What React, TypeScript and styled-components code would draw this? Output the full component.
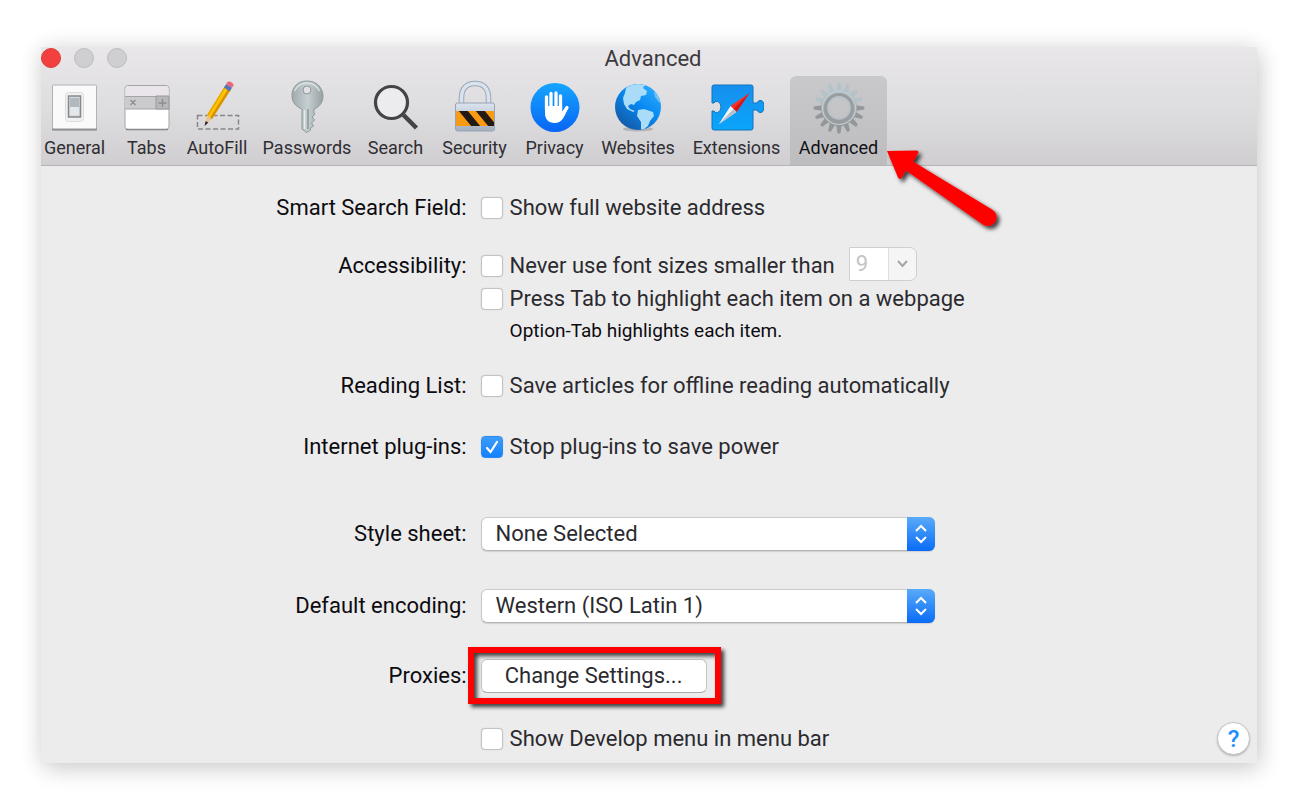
import React, { useState } from "react";
import styled, { createGlobalStyle } from "styled-components";

const GlobalStyle = createGlobalStyle`
  *, *::before, *::after { box-sizing: border-box; }
  body { margin: 0; background: #fff; color: #2b2a2f; font-family: Roboto, "Liberation Sans", sans-serif; font-size: 22px; line-height: 28px; }
  button, select, input { font: inherit; color: inherit; margin: 0; }
`;

const Page = styled.div`
  padding: 47px 41px;
`;

const Window = styled.main`
  background: #ececec;
  box-shadow: 0 0 22px rgba(0, 0, 0, 0.08), 3px 6px 22px rgba(0, 0, 0, 0.16);
`;

const Header = styled.header`
  background: linear-gradient(#e9e7e9, #dddcde 55%, #d0ced1);
  border-bottom: 1px solid #b6b4b7;
`;

const TitleBar = styled.div`
  display: grid;
  grid-template-columns: 1fr auto 1fr;
  height: 29px;
`;

const Lights = styled.div`
  display: flex;
  gap: 13px;
  padding-top: 1px;
`;

const Light = styled.button<{ $fill: string; $edge: string }>`
  width: 20px;
  height: 20px;
  padding: 0;
  border: 1px solid ${(p) => p.$edge};
  border-radius: 50%;
  background: ${(p) => p.$fill};
`;

const Title = styled.h1`
  margin: 0;
  padding-left: 8px;
  font-size: 22px;
  line-height: 24px;
  font-weight: 400;
  color: #3c3a3e;
`;

const Toolbar = styled.nav`
  display: flex;
  margin-left: -6px;
`;

const Tab = styled.button<{ $width: number; $active?: boolean }>`
  display: flex;
  flex-direction: column;
  align-items: center;
  gap: 4px;
  flex: none;
  width: ${(p) => p.$width}px;
  height: 89px;
  padding: 7px 0 6px;
  border: 0;
  border-radius: 6px 6px 0 0;
  background: ${(p) => (p.$active ? "linear-gradient(#c9c8ca, #bdbcbe)" : "none")};
  color: ${(p) => (p.$active ? "#111014" : "#2f2e33")};
  font-size: 18px;
  font-weight: 400;
  line-height: 22px;
  svg { display: block; flex: none; }
`;

const TabAnchor = styled.div`
  position: relative;
  margin-left: 1px;
`;

const Arrow = styled.svg`
  position: absolute;
  left: calc(100% - 4px);
  top: 70px;
  pointer-events: none;
`;

const Form = styled.form`
  padding: 25px 0 7px;
`;

const Row = styled.div<{ $gap?: number }>`
  display: grid;
  grid-template-columns: 35% 1fr auto;
  column-gap: 14px;
  align-items: start;
  margin-top: ${(p) => p.$gap ?? 0}px;
`;

const Caption = styled.span`
  text-align: right;
  line-height: 34px;
  color: #0c0b10;
  white-space: nowrap;
`;

const CaptionLabel = styled(Caption).attrs({ as: "label" })<{ htmlFor?: string }>``;

const Line = styled.div<{ $height?: number }>`
  display: flex;
  align-items: center;
  height: ${(p) => p.$height ?? 34}px;
`;

const CheckLabel = styled.label`
  display: flex;
  align-items: center;
  gap: 7px;
  white-space: nowrap;
`;

const Note = styled.p`
  margin: 0;
  padding-left: 29px;
  color: #0c0b10;
  font-size: 19px;
  line-height: 32px;
`;

const CheckBox = styled.span`
  position: relative;
  display: flex;
  width: 22px;
  height: 22px;
  svg { position: absolute; inset: 0; pointer-events: none; }
`;

const CheckInput = styled.input`
  appearance: none;
  width: 22px;
  height: 22px;
  border: 1px solid #c3c3c3;
  border-radius: 4px;
  background: #fff;
  box-shadow: 0 0 1px #bbb;
  &:checked { background: linear-gradient(#3d9dfb, #1480fa); border-color: #2a8bf5; }
`;

const SelectWrap = styled.div`
  position: relative;
  width: 100%;
  max-width: 454px;
  height: 34px;
`;

const PopUp = styled.select`
  appearance: none;
  display: block;
  width: 100%;
  height: 34px;
  padding: 0 40px 0 14px;
  border: 1px solid #c9c9c9;
  border-bottom-color: #b5b5b5;
  border-radius: 6px;
  background: #fff;
  box-shadow: 0 1px 1px rgba(0, 0, 0, 0.12);
`;

const PopUpCap = styled.span`
  position: absolute;
  inset: 0 0 0 auto;
  display: flex;
  align-items: center;
  justify-content: center;
  width: 28px;
  border-radius: 0 6px 6px 0;
  background: linear-gradient(#58abf8, #0a6bf6);
  pointer-events: none;
`;

const Combo = styled.div`
  position: relative;
  width: 68px;
  height: 34px;
  margin: -4px 0 0 14px;
`;

const ComboSelect = styled.select`
  appearance: none;
  display: block;
  width: 68px;
  height: 34px;
  padding: 0 0 0 6px;
  border: 1px solid #cfcfcf;
  border-radius: 1px 7px 7px 1px;
  background: linear-gradient(90deg, #fff 38px, #dedede 38px, #dedede 39px, #f5f5f5 39px);
  &:disabled { color: #c4c4c4; opacity: 1; }
`;

const ComboArrow = styled.svg`
  position: absolute;
  right: 8px;
  top: 12px;
  pointer-events: none;
`;

const PushButton = styled.button`
  width: 226px;
  height: 34px;
  padding: 0;
  border: 1px solid #c4c4c4;
  border-bottom-color: #aaa;
  border-radius: 6px;
  background: #fff;
`;

const Highlight = styled.div`
  position: relative;
  width: 226px;
  height: 34px;
  &::after {
    content: "";
    position: absolute;
    inset: -12px -14px -11px -13px;
    border: 6px solid #fe0000;
    box-shadow: 3px 3px 4px rgba(0, 0, 0, 0.75), inset 3px 3px 4px rgba(0, 0, 0, 0.75);
    pointer-events: none;
  }
`;

const HelpButton = styled.button`
  width: 33px;
  height: 33px;
  margin-right: 7px;
  padding: 0;
  border: 1px solid #c6c6c6;
  border-radius: 50%;
  background: #fff;
  box-shadow: 0 1px 2px rgba(0, 0, 0, 0.25);
  color: #1c8cff;
  font-size: 24px;
  font-weight: 500;
`;

const GeneralIcon = () => (
  <svg width="48" height="50" viewBox="0 0 48 50" aria-hidden="true">
    <rect x="1.5" y="2" width="44" height="45" rx="1" fill="#fafafb" stroke="#b2b2b5" />
    <path d="M1 46.5h45" stroke="#929296" strokeWidth="2" />
    <rect x="14.5" y="9.5" width="18" height="29" rx="3" fill="#f1f1f2" stroke="#dcdcde" />
    <rect x="17.5" y="13" width="12" height="21" fill="#d6dadd" stroke="#85898e" strokeWidth="1.5" />
    <path d="M19 15h9v9h-9z" fill="#b2babf" />
    <path d="M19 24h9v8h-9z" fill="#e4e8ea" />
  </svg>
);

const TabsIcon = () => (
  <svg width="48" height="50" viewBox="0 0 48 50" aria-hidden="true">
    <rect x="2" y="2.5" width="44" height="44" rx="3" fill="#fff" stroke="#a5a5a8" />
    <path d="M2.5 13V6q0-3 3-3h37q3 0 3 3v7z" fill="#e9e5ea" />
    <path d="M2 13h44v13H2z" fill="#cbcbcd" />
    <path d="M2 13.5h44M2 26h44" stroke="#a4a4a7" />
    <path d="M33 13h13v13H33z" fill="#b8b8bb" stroke="#98989b" />
    <path d="M7.5 17l5 5m0-5l-5 5M39.5 16v8m-4-4h8" stroke="#8d8a90" strokeWidth="1.3" />
    <path d="M3 46.5h42" stroke="#88888b" strokeWidth="1.5" />
  </svg>
);

const AutoFillIcon = () => (
  <svg width="48" height="50" viewBox="0 0 48 50" overflow="visible" aria-hidden="true">
    <rect x="4.5" y="32.5" width="41" height="13.5" fill="none" stroke="#88868a" strokeWidth="1.5" strokeDasharray="5 2.5" />
    <g transform="translate(-1 -1)">
      <path d="M13 43l2-10 5 4z" fill="#e7c592" />
      <path d="M12.500 44l1.200-5 2.600 1.800z" fill="#28242a" />
      <path d="M15 33L33 4l5.5 4L20 37z" fill="#ffc400" />
      <path d="M18.200 35.500L36.500 6.500l2 1.500L20 37z" fill="#d89000" />
      <path d="M15 33L33 4l1 .7L16.300 33.800z" fill="#e7a400" />
      <path d="M32 5.500l2.200-3.500 5.800 3.800-2.300 3.700z" fill="#5475b5" />
      <path d="M34.200 2l1.200-2q2-1.200 4.300.5t1.800 3l-1.500 2.300z" fill="#ee6677" />
    </g>
  </svg>
);

const PasswordsIcon = () => (
  <svg width="48" height="50" viewBox="0 3 48 50" overflow="visible" aria-hidden="true">
    <defs>
      <linearGradient id="key" x1="0" x2="1">
        <stop offset="0" stopColor="#a1abae" /><stop offset=".5" stopColor="#c5cfd1" /><stop offset="1" stopColor="#98a2a5" />
      </linearGradient>
    </defs>
    <path fillRule="evenodd" d="M24 1C15 1 9 7 9 15.500c0 7 4 11 10 13.500v20l4.500 3.500 4-2.500V48l3-2-2-3 3-3-2.500-3 3-3-1-1.500V29c6-2.500 9-7 9-13.500C39.500 7 33 1 24 1zm0 5a4 4 0 1 1 0 8 4 4 0 0 1 0-8z" fill="url(#key)" stroke="#8e989b" strokeWidth="1" />
    <path d="M21.500 30v19" stroke="#e8eeee" strokeWidth="1.500" />
    <path d="M25 29v20" stroke="#8c9598" strokeWidth="1.500" />
    <path d="M11.500 11q4-8 12.500-8t12.500 8" fill="none" stroke="#d8e0e1" strokeWidth="1.500" />
  </svg>
);

const SearchIcon = () => (
  <svg width="48" height="50" viewBox="0 0 48 50" aria-hidden="true">
    <path d="M31.500 32L44.500 45" stroke="#444346" strokeWidth="4.500" />
    <circle cx="19.500" cy="19.500" r="16" fill="#ececee" stroke="#444346" strokeWidth="3.200" />
  </svg>
);

const SecurityIcon = () => (
  <svg width="48" height="50" viewBox="0 0 48 50" overflow="visible" aria-hidden="true">
    <defs>
      <linearGradient id="lockBody" x2="0" y2="1">
        <stop offset="0" stopColor="#dbe4ee" /><stop offset="1" stopColor="#a3afbf" />
      </linearGradient>
      <clipPath id="lockBand"><path d="M5 28h38v15H5z" /></clipPath>
    </defs>
    <path d="M10.500 22V15C10.500 5 16 .500 24 .500S37.500 5 37.500 15v7" fill="none" stroke="#9ba8ba" strokeWidth="5.500" />
    <path d="M10.500 22V15C10.500 5 16 .500 24 .500S37.500 5 37.500 15v7" fill="none" stroke="#d9e3ee" strokeWidth="3.500" />
    <rect x="4.500" y="20" width="39" height="28" rx="2" fill="url(#lockBody)" stroke="#98a4b5" />
    <path d="M5 28h38v15H5z" fill="#f99b12" />
    <g clipPath="url(#lockBand)"><path d="M7 27h9l14 17h-9zM24 27h9l14 17h-9z" fill="#241a15" /></g>
  </svg>
);

const PrivacyIcon = () => (
  <svg width="50" height="50" viewBox="0 0 50 50" aria-hidden="true">
    <defs>
      <linearGradient id="privacy" x2="0" y2="1">
        <stop offset="0" stopColor="#16a5ff" /><stop offset="1" stopColor="#0865f4" />
      </linearGradient>
    </defs>
    <circle cx="25" cy="24.500" r="24.500" fill="url(#privacy)" />
    <g fill="none" stroke="#fff" strokeWidth="3.300" strokeLinecap="round">
      <path d="M16.500 26V14M21 25V10.500M26 25V10M30.500 25V13" />
      <path d="M32 32l5-7.500" />
    </g>
    <path d="M15 23h17.200v6l3.800-4 2 .5c-2 4-3 7-5 10-2 3-5 4.500-8.500 4.500-6 0-9.500-4-9.500-9.500z" fill="#fff" />
  </svg>
);

const WebsitesIcon = () => (
  <svg width="48" height="50" viewBox="0 0 48 50" aria-hidden="true">
    <defs>
      <linearGradient id="globe" x1="1" y1="0" x2=".2" y2="1">
        <stop offset="0" stopColor="#35b4ff" /><stop offset=".5" stopColor="#0789f2" /><stop offset="1" stopColor="#15569f" />
      </linearGradient>
      <clipPath id="globeDisc"><circle cx="24" cy="24" r="23" /></clipPath>
    </defs>
    <ellipse cx="24" cy="46" rx="15" ry="2.500" fill="#b4b4b8" />
    <circle cx="24" cy="24" r="23" fill="url(#globe)" />
    <g clipPath="url(#globeDisc)" fill="#a9dcf8">
      <path d="M12 5C15 2 20 1 25 1l6 1-2 3 4 3-1 4-5 1-1 4-4 2-2 3-3-1-3 2 2 3 5 2-2 1-6-3-3-5-1-6 2-5z" />
      <path d="M24 27l6-1 9 3 1 4-4 5-2 5-5 4-2-1v-7l-4-6z" />
      <path d="M40 8l4 5 3 7-2-1-4-5z" opacity=".6" />
    </g>
  </svg>
);

const ExtensionsIcon = () => (
  <svg width="54" height="50" viewBox="0 0 54 50" aria-hidden="true">
    <defs>
      <linearGradient id="puzzle" x2="0" y2="1">
        <stop offset="0" stopColor="#168fee" /><stop offset="1" stopColor="#0aa5fa" />
      </linearGradient>
    </defs>
    <path d="M4 2h37q2 0 2 2v16h4q1-3 4-2.500 3 .5 3 6t-3 6q-3 .5-4-2.500h-4v18q0 2-2 2H4q-2 0-2-2V28h2q1 2 3.500 1.500Q11 28.500 11 24t-3.500-5.500Q5 18 4 20H2V4q0-2 2-2z" fill="url(#puzzle)" stroke="#1273bd" />
    <path d="M39.500 10L20.500 23l6 6z" fill="#fb2f21" />
    <path d="M39.500 10L23.500 26l3 3z" fill="#d5141a" />
    <path d="M9 41L20.500 23l6 6z" fill="#f4f6f8" />
    <path d="M9 41l14.500-15 3 3z" fill="#b5c0c9" />
  </svg>
);

const GearIcon = () => {
  const teeth = Array.from({ length: 16 }, (_, i) => i * 22.5);
  return (
    <svg width="52" height="50" viewBox="0 0 52 50" overflow="visible" aria-hidden="true">
      <defs>
        <linearGradient id="gear" x1="0" y1="4" x2="0" y2="46" gradientUnits="userSpaceOnUse">
          <stop offset="0" stopColor="#bccad1" /><stop offset="1" stopColor="#8f9395" />
        </linearGradient>
      </defs>
      {teeth.map((a) => (
        <path key={a} d="M23.200 8.500l1.300-8.500q1.500-1 3 0l1.300 8.500z" fill={a > 80 && a < 280 ? "#929799" : "#b4c2c9"} transform={`rotate(${a} 26 25)`} />
      ))}
      <circle cx="26" cy="25" r="14.500" fill="none" stroke="url(#gear)" strokeWidth="7" />
      <circle cx="26" cy="25" r="13.500" fill="none" stroke="#989da0" strokeWidth="3" />
      <circle cx="26" cy="25" r="16.500" fill="none" stroke="#c3ced3" strokeWidth="1.200" />
      <circle cx="26" cy="25" r="11" fill="none" stroke="#b9c2c6" strokeWidth="1.500" />
    </svg>
  );
};

const tabs = [
  { name: "General", width: 79, Icon: GeneralIcon },
  { name: "Tabs", width: 65, Icon: TabsIcon },
  { name: "AutoFill", width: 76, Icon: AutoFillIcon },
  { name: "Passwords", width: 104, Icon: PasswordsIcon },
  { name: "Search", width: 73, Icon: SearchIcon },
  { name: "Security", width: 85, Icon: SecurityIcon },
  { name: "Privacy", width: 75, Icon: PrivacyIcon },
  { name: "Websites", width: 92, Icon: WebsitesIcon },
  { name: "Extensions", width: 105, Icon: ExtensionsIcon },
];

function Check({ label, initial = false }: { label: string; initial?: boolean }) {
  const [on, setOn] = useState(initial);
  return (
    <CheckLabel>
      <CheckBox>
        <CheckInput type="checkbox" checked={on} onChange={(e) => setOn(e.target.checked)} />
        {on && (
          <svg width="22" height="22" viewBox="0 0 22 22" fill="none" stroke="#fff" strokeWidth="2.200" strokeLinecap="round" aria-hidden="true">
            <path d="M6 12l3.500 4L16 6" />
          </svg>
        )}
      </CheckBox>
      {label}
    </CheckLabel>
  );
}

function PopUpMenu({ id, value }: { id: string; value: string }) {
  return (
    <SelectWrap>
      <PopUp id={id} defaultValue={value}>
        <option>{value}</option>
      </PopUp>
      <PopUpCap>
        <svg width="14" height="20" viewBox="0 0 14 20" fill="none" stroke="#fff" strokeWidth="2" aria-hidden="true">
          <path d="M2 7l5-5 5 5M2 13l5 5 5-5" />
        </svg>
      </PopUpCap>
    </SelectWrap>
  );
}

export default function App() {
  return (
    <>
      <GlobalStyle />
      <Page>
        <Window>
          <Header>
            <TitleBar>
              <Lights>
                <Light type="button" aria-label="Close" $fill="#f2403f" $edge="#dc3a38" />
                <Light type="button" aria-label="Minimize" $fill="#cfced0" $edge="#bdbcbe" />
                <Light type="button" aria-label="Zoom" $fill="#cfced0" $edge="#bdbcbe" />
              </Lights>
              <Title>Advanced</Title>
            </TitleBar>
            <Toolbar>
              {tabs.map(({ name, width, Icon }) => (
                <Tab key={name} type="button" $width={width}>
                  <Icon />
                  {name}
                </Tab>
              ))}
              <TabAnchor>
                <Tab type="button" $width={97} $active>
                  <GearIcon />
                  Advanced
                </Tab>
                <Arrow width="130" height="96" viewBox="0 0 130 96" aria-hidden="true">
                  <defs>
                    <filter id="arrowShadow" x="-10%" y="-10%" width="130%" height="130%">
                      <feDropShadow dx="3" dy="3" stdDeviation="2" floodColor="#000" floodOpacity=".75" />
                    </filter>
                  </defs>
                  <path d="M4 5l29.500-.5q3 .5 1.500 3L30 15.500l79 48a8.500 8.500 0 0 1-8.500 15.500L23 24.500l-4.500 7.500q-2 2-3.500-.5z" fill="#fe0000" filter="url(#arrowShadow)" />
                </Arrow>
              </TabAnchor>
            </Toolbar>
          </Header>

          <Form>
            <Row>
              <Caption>Smart Search Field:</Caption>
              <Line><Check label="Show full website address" /></Line>
            </Row>
            <Row $gap={24}>
              <Caption>Accessibility:</Caption>
              <div>
                <Line>
                  <Check label="Never use font sizes smaller than" />
                  <Combo>
                    <ComboSelect disabled aria-label="Minimum font size" defaultValue="9">
                      <option>9</option>
                    </ComboSelect>
                    <ComboArrow width="13" height="10" viewBox="0 0 13 10" fill="none" stroke="#a6a6a6" strokeWidth="2">
                      <path d="M2 2l4.500 5L11 2" />
                    </ComboArrow>
                  </Combo>
                </Line>
                <Line $height={32}><Check label="Press Tab to highlight each item on a webpage" /></Line>
                <Note>Option-Tab highlights each item.</Note>
              </div>
            </Row>
            <Row $gap={22}>
              <Caption>Reading List:</Caption>
              <Line><Check label="Save articles for offline reading automatically" /></Line>
            </Row>
            <Row $gap={27}>
              <Caption>Internet plug-ins:</Caption>
              <Line><Check label="Stop plug-ins to save power" initial /></Line>
            </Row>
            <Row $gap={53}>
              <CaptionLabel htmlFor="style-sheet">Style sheet:</CaptionLabel>
              <PopUpMenu id="style-sheet" value="None Selected" />
            </Row>
            <Row $gap={38}>
              <CaptionLabel htmlFor="encoding">Default encoding:</CaptionLabel>
              <PopUpMenu id="encoding" value="Western (ISO Latin 1)" />
            </Row>
            <Row $gap={36}>
              <CaptionLabel htmlFor="proxies">Proxies:</CaptionLabel>
              <Highlight>
                <PushButton id="proxies" type="button">Change Settings...</PushButton>
              </Highlight>
            </Row>
            <Row $gap={29}>
              <span />
              <Line><Check label="Show Develop menu in menu bar" /></Line>
              <HelpButton type="button" aria-label="Help">?</HelpButton>
            </Row>
          </Form>
        </Window>
      </Page>
    </>
  );
}
